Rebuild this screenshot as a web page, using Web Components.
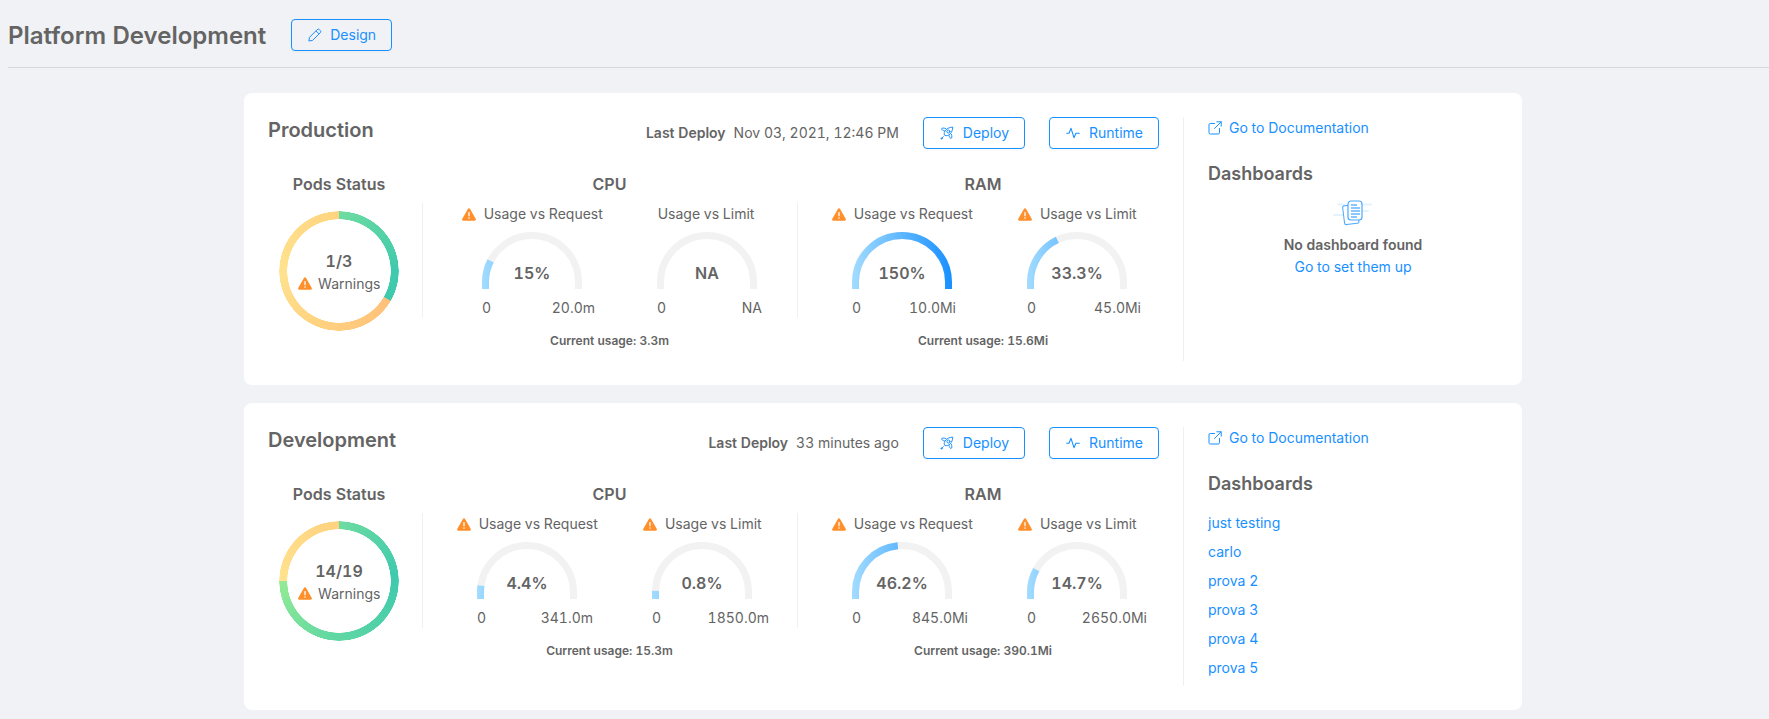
<!DOCTYPE html>
<html lang="en">
<head>
<meta charset="utf-8">
<title>Platform Development</title>
<style>
  html,body{margin:0;background:#f0f2f5;height:719px;overflow:hidden}
  body{font-family:Inter,"Liberation Sans",sans-serif;color:#646464;font-size:14px;font-variant-numeric:tabular-nums;--blue:#1890ff}
  main{display:flex;flex-direction:column;gap:18px;padding:25px 247px 0 244px}
</style>
</head>
<body>
<page-header title="Platform Development"></page-header>
<main>
  <env-card name="Production" deploy-text="Nov 03, 2021, 12:46 PM">
    <pods-status slot="pods" value="1/3" mode="a"></pods-status>
    <metric-group slot="cpu" title="CPU" usage="Current usage: 3.3m" pad="21.5">
      <gauge-meter label="Usage vs Request" warn pct="15%" fill="15" max="20.0m" over="13"></gauge-meter>
      <gauge-meter label="Usage vs Limit" pct="NA" fill="0" max="NA" over="5"></gauge-meter>
    </metric-group>
    <metric-group slot="ram" title="RAM" usage="Current usage: 15.6Mi" pad="16.5">
      <gauge-meter label="Usage vs Request" warn pct="150%" fill="100" max="10.0Mi" over="4"></gauge-meter>
      <gauge-meter label="Usage vs Limit" warn pct="33.3%" fill="36" max="45.0Mi" over="14"></gauge-meter>
    </metric-group>
    <dash-panel slot="side" empty></dash-panel>
  </env-card>
  <env-card name="Development" deploy-text="33 minutes ago">
    <pods-status slot="pods" value="14/19" mode="b"></pods-status>
    <metric-group slot="cpu" title="CPU" usage="Current usage: 15.3m" pad="16.5">
      <gauge-meter label="Usage vs Request" warn pct="4.4%" fill="4.4" max="341.0m" over="16"></gauge-meter>
      <gauge-meter label="Usage vs Limit" warn pct="0.8%" fill="0.8" max="1850.0m" over="17"></gauge-meter>
    </metric-group>
    <metric-group slot="ram" title="RAM" usage="Current usage: 390.1Mi" pad="16.5">
      <gauge-meter label="Usage vs Request" warn pct="46.2%" fill="47" max="845.0Mi" over="16"></gauge-meter>
      <gauge-meter label="Usage vs Limit" warn pct="14.7%" fill="16" max="2650.0Mi" over="20"></gauge-meter>
    </metric-group>
    <dash-panel slot="side" items="just testing|carlo|prova 2|prova 3|prova 4|prova 5"></dash-panel>
  </env-card>
</main>
<script>
const ICONS={
  pencil:'<svg width="14" height="14" viewBox="0 0 14 14" fill="none" stroke="currentColor" stroke-width="1" stroke-linejoin="round"><path d="M.9 13l.6-3.700L9.100 1.700a1.700 1.700 0 0 1 2.400 0l.7.7a1.700 1.700 0 0 1 0 2.400L4.600 12.400z"/><path d="M8 2.900l3 3"/></svg>',
  rocket:'<svg width="14" height="14" viewBox="0 0 14 14" fill="none" stroke="currentColor" stroke-width="1" stroke-linecap="round" stroke-linejoin="round"><path d="M4.300 8.700C3.300 5.500 6.700 1.400 12.800 1.100c-.3 6.100-4.400 9.500-7.600 8.500z"/><circle cx="8.400" cy="5.500" r="1.500"/><path d="M4.400 4.900C2.600 4.500 1.300 3.500 1.600 2.700c.3-.8 2-.9 4.100-.2M9 9.600c.4 1.800 1.400 3.100 2.200 2.800.8-.3.9-2 .2-4.100"/><path d="M3.300 10.700l-1 1"/><circle cx="1.500" cy="12.500" r=".6"/></svg>',
  pulse:'<svg width="14" height="14" viewBox="0 0 14 14" fill="none" stroke="currentColor" stroke-width="1.100" stroke-linecap="round" stroke-linejoin="round"><path d="M.7 7.300h2.300L5 2.300l3 9.400 1.900-4.400h3.400"/></svg>',
  ext:'<svg width="14" height="14" viewBox="0 0 14 14" fill="none" stroke="currentColor" stroke-width="1" stroke-linecap="round" stroke-linejoin="round"><path d="M11.500 7.500v4.200a1.300 1.300 0 0 1-1.300 1.300H2.300A1.300 1.300 0 0 1 1 11.700V3.800a1.300 1.300 0 0 1 1.300-1.300h4.200"/><path d="M8.800.8h4.400v4.400M13.200.8L6.500 7.500"/></svg>'
};
const WARN='<svg width="14" height="13" viewBox="0 0 14 13" style="display:block"><path d="M7 .2c.5 0 .9.300 1.100.7l5.700 10.100c.4.800-.1 1.800-1.100 1.800H1.300c-1 0-1.500-1-1.100-1.800L5.900.9C6.100.5 6.500.2 7 .2z" fill="#ff8f2b"/><rect x="6.350" y="4" width="1.300" height="4.300" rx=".5" fill="#fff"/><circle cx="7" cy="10" r=".8" fill="#fff"/></svg>';

function def(name,render,css){
  customElements.define(name,class extends HTMLElement{
    connectedCallback(){
      if(this.shadowRoot)return;
      const r=this.attachShadow({mode:'open'});
      r.innerHTML='<style>'+css+'</style>'+render(this);
    }
  });
}

def('outline-button',h=>`${ICONS[h.getAttribute('icon')]}<slot></slot>`,`
  :host{display:inline-flex;align-items:center;gap:9px;height:32px;box-sizing:border-box;padding:0 15px 0 16px;border:1px solid #1890ff;border-radius:4px;color:#1890ff;font-size:14px;line-height:20px;box-shadow:0 2px 0 rgba(0,0,0,.015);white-space:nowrap}
  svg{display:block;flex:none}`);

def('page-header',h=>`<h1>${h.getAttribute('title')}</h1><outline-button icon="pencil">Design</outline-button>`,`
  :host{display:flex;align-items:center;gap:25px;height:64px;padding:3px 0 0 0;margin-left:8px;border-bottom:1px solid #d6d8de}
  h1{margin:0;font-size:24px;line-height:32px;font-weight:600;position:relative;top:1px}
  outline-button{gap:8px}`);

def('env-card',h=>`
  <div class="main">
    <div class="top">
      <h2>${h.getAttribute('name')}</h2>
      <div class="deploy"><b>Last Deploy</b><span>${h.getAttribute('deploy-text')}</span></div>
      <outline-button icon="rocket">Deploy</outline-button>
      <outline-button icon="pulse">Runtime</outline-button>
    </div>
    <div class="metrics"><slot name="pods"></slot><slot name="cpu"></slot><slot name="ram"></slot></div>
  </div>
  <div class="side"><slot name="side"></slot></div>`,`
  :host{display:flex;box-sizing:border-box;background:#fff;border-radius:8px;padding:24px;width:1278px}
  .main{width:901px;flex:none;padding-bottom:12px}
  .top{display:flex;align-items:center;height:32px;padding-right:10px}
  h2{margin:0 auto 0 0;font-size:20px;line-height:28px;font-weight:600;position:relative;top:-3px}
  .deploy{display:flex;gap:8px;margin-right:24px;font-size:14px;line-height:20px}
  .deploy b{font-weight:600}
  outline-button+outline-button{margin-left:24px}
  .metrics{display:grid;grid-template-columns:154px 375px 372px;margin-top:24px}
  .side{flex:1;margin-left:14px;border-left:1px solid #f0f0f0;padding-left:24px;min-width:0}`);

def('pods-status',h=>{
  const a='conic-gradient(#6edca0 0deg,#3fc9ad 90deg,#3fc9ad 119.500deg,#ffc07a 120.500deg,#ffd27f 200deg,#ffe28f 270deg,#ffd480 359.500deg,#6edca0 360deg)';
  const b='conic-gradient(#6edca0 0deg,#3fc9ad 85deg,#62d8a2 190deg,#93eb93 269.500deg,#ffe28f 270.500deg,#ffd27f 359.500deg,#6edca0 360deg)';
  return `<div class="t">Pods Status</div>
  <div class="donut" style="--g:${h.getAttribute('mode')==='a'?a:b}">
    <div class="v">${h.getAttribute('value')}</div>
    <div class="w">${WARN}<span>Warnings</span></div>
  </div>`;
},`
  :host{display:flex;flex-direction:column;align-items:center;width:142px}
  .t{font-size:16px;line-height:22px;font-weight:600;white-space:nowrap}
  .donut{position:relative;width:120px;height:120px;margin-top:16px;display:flex;flex-direction:column;align-items:center;justify-content:center}
  .donut::before{content:"";position:absolute;inset:0;border-radius:50%;background:var(--g);
    -webkit-mask:radial-gradient(circle,transparent 51.500px,#000 52px,#000 59.500px,transparent 60px);
    mask:radial-gradient(circle,transparent 51.500px,#000 52px,#000 59.500px,transparent 60px)}
  .v{font-size:16px;line-height:24px;font-weight:600}
  .w{display:flex;align-items:center;gap:6.500px;font-size:14px;line-height:20px;margin:1px 0 0 0}`);

def('metric-group',h=>`<div class="t">${h.getAttribute('title')}</div>
  <div class="row" style="padding-left:${h.getAttribute('pad')}px"><slot></slot></div>
  <div class="u">${h.getAttribute('usage')}</div>`,`
  :host{display:block}
  .t{font-size:16px;line-height:22px;font-weight:600;text-align:center}
  .row{display:flex;height:115px;margin-top:8px;border-left:1px solid #f0f0f0}
  .u{margin-top:15px;font-size:12px;line-height:16px;font-weight:600;text-align:center}`);

def('gauge-meter',h=>{
  const L=Math.PI*46.5, fill=parseFloat(h.getAttribute('fill'));
  const dash=fill>0?(7+fill/100*L+(fill>=100?7:0)):0;
  const warn=h.hasAttribute('warn');
  return `<div class="l ${warn?'':'nw'}">${warn?WARN:''}<span>${h.getAttribute('label')}</span></div>
  <div class="g">
    <svg width="100" height="57" viewBox="0 0 100 57" fill="none" stroke-width="7">
      <defs><linearGradient id="gr" gradientUnits="userSpaceOnUse" x1="0" y1="0" x2="100" y2="0"><stop offset="0" stop-color="#a2dcff"/><stop offset="1" stop-color="#1890ff"/></linearGradient></defs>
      <path d="M3.500 57V50A46.500 46.500 0 0 1 96.500 50V57" stroke="#f2f2f2"/>
      ${dash?`<path d="M3.500 57V50A46.500 46.500 0 0 1 96.500 50V57" stroke="url(#gr)" stroke-dasharray="${dash} 400"/>`:''}
    </svg>
    <div class="p">${h.getAttribute('pct')}</div>
  </div>
  <div class="r"><span>0</span><span class="m" style="margin-right:-${h.getAttribute('over')}px">${h.getAttribute('max')}</span></div>`;
},`
  :host{display:flex;flex-direction:column;align-items:center;width:175px;flex:none}
  .l{display:flex;align-items:center;gap:7.500px;line-height:20px;white-space:nowrap;font-size:14px;margin:1px 0 -1px 1px}
  .nw{padding-right:3px}
  .g{position:relative;width:100px;height:57px;margin-top:9px}
  svg{display:block}
  .p{position:absolute;left:0;right:0;top:29px;text-align:center;font-size:16px;line-height:24px;font-weight:600}
  .r{display:flex;justify-content:space-between;width:100px;margin-top:9px;line-height:20px;white-space:nowrap}
  `);

def('dash-panel',h=>{
  const items=(h.getAttribute('items')||'').split('|').filter(Boolean);
  const body=h.hasAttribute('empty')?`<div class="e">
    <svg width="40" height="26" viewBox="0 0 40 26" fill="none">
      <g stroke="#e3f3ff" stroke-width="2.200" stroke-linecap="round"><path d="M5 4.500h6M28 4.500h10M1 15h9M30 11h5M34 11h1"/></g>
      <rect x="10.500" y="5" width="14.500" height="19" rx="2" transform="rotate(-7 18 14)" fill="#fff" stroke="#4aa8ff"/>
      <rect x="15" y="1" width="14" height="19" rx="3" fill="#fff" stroke="#4aa8ff" stroke-width="1.200"/>
      <g stroke="#1890ff"><path d="M18 5h6M18 8h9M18 11h9M18 14h9M18 17h6"/></g>
    </svg>
    <b>No dashboard found</b><a>Go to set them up</a></div>`
    :`<ul>${items.map(i=>`<li>${i}</li>`).join('')}</ul>`;
  return `<div class="doc">${ICONS.ext}<span>Go to Documentation</span></div><h3>Dashboards</h3>${body}`;
},`
  :host{display:block}
  .doc{display:flex;align-items:center;gap:7px;color:#1890ff;line-height:22px}
  svg{display:block;flex:none}
  h3{margin:21px 0 0;font-size:18px;line-height:28px;font-weight:600}
  .e{display:flex;flex-direction:column;align-items:center;margin-top:12px}
  .e b{font-weight:600;line-height:20px;margin-top:9px}
  .e a{color:#1890ff;line-height:22px;margin-top:1px}
  ul{list-style:none;margin:9.500px 0 0;padding:0 0 4.500px;color:#1890ff}
  li{height:29px;line-height:29px}`);
</script>
</body>
</html>
